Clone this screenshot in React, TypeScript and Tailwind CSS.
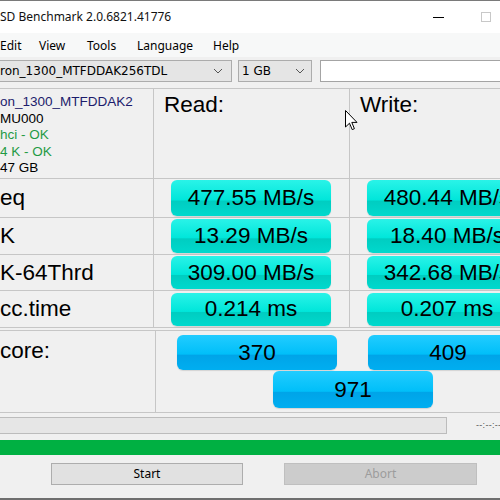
import React from "react";

type Row = { label: string; read: string; write: string; h: string; btn: string };

const rows: Row[] = [
  { label: "eq", read: "477.55 MB/s", write: "480.44 MB/s", h: "h-[39px]", btn: "h-[36px]" },
  { label: "K", read: "13.29 MB/s", write: "18.40 MB/s", h: "h-[37px]", btn: "h-[34px]" },
  { label: "K-64Thrd", read: "309.00 MB/s", write: "342.68 MB/s", h: "h-[36px]", btn: "h-[33px]" },
  { label: "cc.time", read: "0.214 ms", write: "0.207 ms", h: "h-[37px]", btn: "h-[33px]" },
];

const cyan =
  "bg-[linear-gradient(180deg,#2af3e8_0%,#00e6da_56%,#00cdc1_58%,#00d9cd_100%)]";
const blue =
  "bg-[linear-gradient(180deg,#22ccff_0%,#00bff9_55%,#00a4e8_57%,#00aef0_100%)]";

const Result = ({ value, size, tone }: { value: string; size: string; tone: string }) => (
  <div
    className={`${size} ${tone} w-[160px] shrink-0 rounded-[6px] flex items-center justify-center whitespace-nowrap text-[22.5px] text-black shadow-[0_1px_1px_rgba(0,0,0,0.12)]`}
  >
    {value}
  </div>
);

const Chevron = () => (
  <svg width="10" height="6" viewBox="0 0 10 6" className="shrink-0">
    <path d="M1 1 L5 5 L9 1" fill="none" stroke="#555" strokeWidth="1" />
  </svg>
);

export default function App() {
  const ui = "font-['Noto_Sans','Liberation_Sans',sans-serif]";
  return (
    <div className="relative w-[500px] h-[500px] overflow-hidden bg-[#f0f0f0] flex flex-col font-['Liberation_Sans',Arial,sans-serif] text-black">
      {/* title bar */}
      <div className={`h-[33px] shrink-0 border-t border-[#7a7a7a] bg-white flex items-center ${ui}`}>
        <span className="text-[12px] text-[#111]">SD Benchmark 2.0.6821.41776</span>
        <div className="ml-auto w-[11px] h-px bg-black mr-[37px] mt-[1px]" />
        <div className="w-[10px] h-[10px] border border-[#c8c8c8] mr-[9px] -mt-[1px]" />
      </div>

      {/* menu */}
      <div className={`h-[24px] shrink-0 bg-[#f7f8f8] flex items-center pt-[1px] text-[12px] ${ui}`}>
        <span className="w-[39px]">Edit</span>
        <span className="w-[48px]">View</span>
        <span className="w-[50px]">Tools</span>
        <span className="w-[76px]">Language</span>
        <span>Help</span>
      </div>

      {/* selectors */}
      <div className="h-[31px] shrink-0 flex items-start pt-[3px] text-[13px]">
        <div className="w-[232px] h-[22px] bg-[#e5e5e5] border-y border-r border-[#acacac] flex items-center pr-[8px] font-['DejaVu_Sans',sans-serif] text-[12px]">
          <span>ron_1300_MTFDDAK256TDL</span>
          <span className="ml-auto"><Chevron /></span>
        </div>
        <div className="ml-[6px] w-[74px] h-[22px] bg-[#e5e5e5] border border-[#acacac] flex items-center pl-[3px] pr-[6px] font-['DejaVu_Sans',sans-serif] text-[12px]">
          <span>1 GB</span>
          <span className="ml-auto"><Chevron /></span>
        </div>
        <div className="ml-[8px] flex-1 h-[22px] bg-white border-y border-l border-[#a4a4a4]" />
      </div>

      {/* results table */}
      <div className="border-t border-[#c6c6c6] shrink-0">
        <div className="flex h-[90px] border-b border-[#c6c6c6]">
          <div className="w-[154px] border-r border-[#c6c6c6] pt-[5px] text-[13.5px] leading-[16.5px]">
            <div className="text-[#1c1c6c]">on_1300_MTFDDAK2</div>
            <div>MU000</div>
            <div className="text-[#1f9a45]">hci - OK</div>
            <div className="text-[#1f9a45]">4 K - OK</div>
            <div>47 GB</div>
          </div>
          <div className="w-[196px] border-r border-[#c6c6c6] pl-[10px] pt-[3px] text-[22.5px] leading-[26px]">
            Read:
          </div>
          <div className="flex-1 pl-[10px] pt-[3px] text-[22.5px] leading-[26px]">Write:</div>
        </div>
        {rows.map((r) => (
          <div key={r.label} className={`flex ${r.h} border-b border-[#c6c6c6]`}>
            <div className="w-[154px] border-r border-[#c6c6c6] flex items-center text-[22.5px]">
              {r.label}
            </div>
            <div className="w-[196px] border-r border-[#c6c6c6] flex items-center pl-[17px]">
              <Result value={r.read} size={r.btn} tone={cyan} />
            </div>
            <div className="flex-1 flex items-center pl-[17px] overflow-hidden">
              <Result value={r.write} size={r.btn} tone={cyan} />
            </div>
          </div>
        ))}
      </div>

      {/* score */}
      <div className="mt-[2px] h-[83px] shrink-0 flex border-y border-[#c6c6c6]">
        <div className="w-[156px] border-r border-[#c6c6c6] pt-[7px] text-[22.5px] leading-[26px]">
          core:
        </div>
        <div className="flex-1 overflow-hidden pt-[4px]">
          <div className="flex pl-[21px] gap-[31px]">
            <Result value="370" size="h-[35px]" tone={blue} />
            <Result value="409" size="h-[35px]" tone={blue} />
          </div>
          <div className="flex pl-[117px] mt-[1px]">
            <Result value="971" size="h-[37px]" tone={blue} />
          </div>
        </div>
      </div>

      {/* progress */}
      <div className="mt-[4px] h-[17px] shrink-0 flex items-center">
        <div className="w-[447px] shrink-0 h-full bg-[#e6e6e6] border-y border-r border-[#bcbcbc]" />
        <span className="ml-[29px] whitespace-nowrap text-[9px] tracking-[0.3px] text-[#555]">--:--:--</span>
      </div>
      <div className="mt-[6px] h-[15px] shrink-0 bg-[#00b042]" />

      <div className={`mt-[8px] h-[22px] shrink-0 flex text-[12px] ${ui}`}>
        <div className="ml-[51px] w-[192px] bg-[#e1e1e1] border border-[#adadad] flex items-center justify-center">
          Start
        </div>
        <div className="ml-[41px] w-[193px] bg-[#cccccc] border border-[#bfbfbf] flex items-center justify-center text-[#9c9c9c]">
          Abort
        </div>
      </div>
      <div className="mt-auto h-[2px] shrink-0 bg-[#6e6e6e]" />

      {/* mouse pointer */}
      <svg
        className="absolute left-[345px] top-[110px]"
        width="13"
        height="21"
        viewBox="0 0 13 21"
      >
        <path
          d="M0.5 0.5 L0.5 17 L4.5 13.2 L7.2 19.6 L9.4 18.7 L6.8 12.4 L12 12.4 Z"
          fill="#fff"
          stroke="#000"
          strokeWidth="1"
          strokeLinejoin="round"
        />
      </svg>
    </div>
  );
}
